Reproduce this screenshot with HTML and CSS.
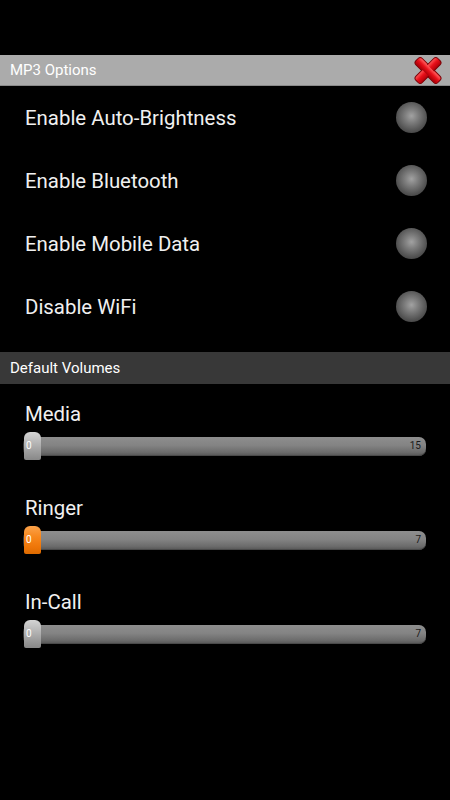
FILE: index.html
```html
<!DOCTYPE html>
<html>
<head>
<meta charset="utf-8">
<link rel="stylesheet" href="styles.css">
</head>
<body>
<div class="screen">
  <div class="top-space"></div>
  <div class="section-header light">
    <span>MP3 Options</span>
    <svg class="close" width="28" height="29" viewBox="0 0 28 29">
      <defs>
        <linearGradient id="rg" x1="0" y1="0" x2="0" y2="1">
          <stop offset="0" stop-color="#ff5a5a"/>
          <stop offset="0.45" stop-color="#e8101a"/>
          <stop offset="1" stop-color="#b00008"/>
        </linearGradient>
      </defs>
      <g transform="translate(14 14.5)">
        <rect x="-15.5" y="-4.5" width="31" height="9" rx="3" transform="rotate(45)" fill="url(#rg)" stroke="#7a0006" stroke-width="1"/>
        <rect x="-15.5" y="-4.5" width="31" height="9" rx="3" transform="rotate(-45)" fill="url(#rg)" stroke="#7a0006" stroke-width="1"/>
        <rect x="-14.5" y="-3.5" width="29" height="7" rx="2.5" transform="rotate(45)" fill="url(#rg)"/>
      </g>
    </svg>
  </div>
  <div class="toggles">
    <div class="toggle-row"><span>Enable Auto-Brightness</span><span class="knob"></span></div>
    <div class="toggle-row"><span>Enable Bluetooth</span><span class="knob"></span></div>
    <div class="toggle-row"><span>Enable Mobile Data</span><span class="knob"></span></div>
    <div class="toggle-row"><span>Disable WiFi</span><span class="knob"></span></div>
  </div>
  <div class="section-header dark"><span>Default Volumes</span></div>
  <div class="volumes">
    <div class="vol">
      <div class="vol-label">Media</div>
      <div class="slider">
        <div class="track"></div>
        <div class="thumb"></div>
        <span class="min">0</span>
        <span class="max">15</span>
      </div>
    </div>
    <div class="vol">
      <div class="vol-label">Ringer</div>
      <div class="slider">
        <div class="track"></div>
        <div class="thumb orange"></div>
        <span class="min">0</span>
        <span class="max">7</span>
      </div>
    </div>
    <div class="vol">
      <div class="vol-label">In-Call</div>
      <div class="slider">
        <div class="track"></div>
        <div class="thumb"></div>
        <span class="min">0</span>
        <span class="max">7</span>
      </div>
    </div>
  </div>
</div>
</body>
</html>
```

FILE: styles.css
```css
* { box-sizing: border-box; }
html, body {
  margin: 0;
  padding: 0;
  background: #000;
}
body {
  font-family: Roboto, "Noto Sans", sans-serif;
  color: #f0f0f0;
  width: 450px;
  height: 800px;
  overflow: hidden;
}
.top-space { height: 55px; }
.section-header {
  height: 31px;
  display: flex;
  align-items: center;
  justify-content: space-between;
  padding-left: 10px;
  padding-right: 8px;
  font-size: 15px;
  color: #fff;
}
.section-header.light {
  background: #ababab;
  border-bottom: 1px solid #8a8a8a;
}
.section-header.dark {
  background: #383838;
  height: 32px;
  margin-top: 14px;
}
.close { display: block; margin-top: 1px; }
.toggles { display: flex; flex-direction: column; }
.toggle-row {
  height: 63px;
  display: flex;
  align-items: center;
  justify-content: space-between;
  padding-left: 25px;
  padding-right: 23px;
  font-size: 20.4px;
}
.knob {
  width: 31px;
  height: 31px;
  border-radius: 50%;
  background: radial-gradient(circle at 50% 45%, #a2a2a2 0%, #7c7c7c 30%, #525252 65%, #303030 100%);
}
.volumes {
  padding-top: 18px;
  display: flex;
  flex-direction: column;
}
.vol {
  padding-left: 25px;
  margin-bottom: 36px;
}
.vol-label {
  font-size: 20.4px;
  line-height: 24px;
  margin-bottom: 6px;
}
.slider {
  position: relative;
  height: 28px;
  width: 403px;
  margin-left: -2px;
  display: flex;
  align-items: center;
}
.track {
  width: 100%;
  height: 19px;
  border-radius: 7px;
  background: linear-gradient(#8e8e8e 0%, #838383 45%, #6c6c6c 80%, #555 100%);
  box-shadow: inset 0 -1px 0 #4a4a4a;
}
.thumb {
  position: absolute;
  left: 1px;
  top: 0;
  width: 17px;
  height: 28px;
  border-radius: 6px 6px 2px 2px;
  background: linear-gradient(#d4d4d4 0%, #b9b9b9 35%, #9a9a9a 75%, #888 100%);
  box-shadow: -1px 0 1px rgba(0,0,0,0.6);
}
.thumb.orange {
  background: linear-gradient(#fba24a 0%, #f7871c 40%, #ee7608 75%, #dd6a00 100%);
}
.min {
  position: absolute;
  left: 3px;
  top: 8px;
  font-size: 10px;
  line-height: 12px;
  color: #fff;
}
.max {
  position: absolute;
  right: 5px;
  top: 8px;
  font-size: 10px;
  line-height: 12px;
  color: #1a1a1a;
}
```
